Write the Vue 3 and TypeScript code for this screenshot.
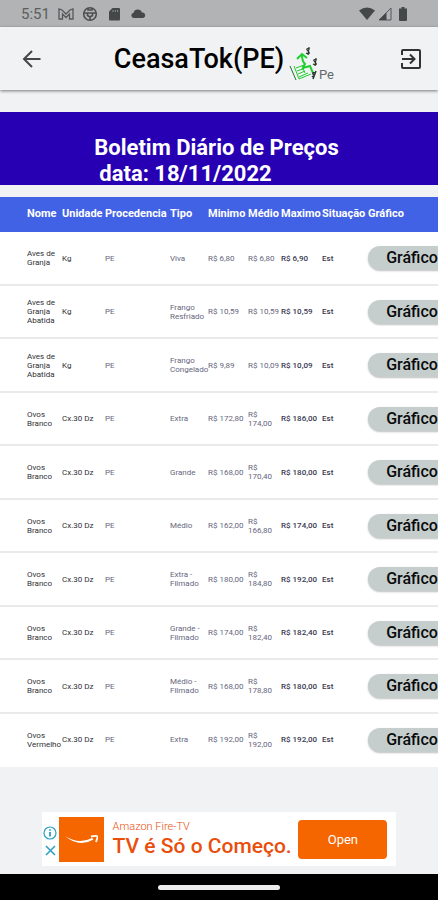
<script setup lang="ts">
interface Quote {
  name: string
  unit: string
  origin: string
  kind: string
  min: string
  avg: string
  max: string
  status: string
}

const columns: string[] = ['Nome', 'Unidade', 'Procedencia', 'Tipo', 'Minimo', 'Médio', 'Maximo', 'Situação', 'Gráfico']

const quote = (name: string, unit: string, kind: string, min: string, avg: string, max: string): Quote => ({
  name, unit, origin: 'PE', kind, min: `R$ ${min}`, avg: `R$ ${avg}`, max: `R$ ${max}`, status: 'Est',
})

const quotes: Quote[] = [
  quote('Aves de Granja', 'Kg', 'Viva', '6,80', '6,80', '6,90'),
  quote('Aves de Granja Abatida', 'Kg', 'Frango Resfriado', '10,59', '10,59', '10,59'),
  quote('Aves de Granja Abatida', 'Kg', 'Frango Congelado', '9,89', '10,09', '10,09'),
  quote('Ovos Branco', 'Cx.30 Dz', 'Extra', '172,80', '174,00', '186,00'),
  quote('Ovos Branco', 'Cx.30 Dz', 'Grande', '168,00', '170,40', '180,00'),
  quote('Ovos Branco', 'Cx.30 Dz', 'Médio', '162,00', '166,80', '174,00'),
  quote('Ovos Branco', 'Cx.30 Dz', 'Extra - Filmado', '180,00', '184,80', '192,00'),
  quote('Ovos Branco', 'Cx.30 Dz', 'Grande - Filmado', '174,00', '182,40', '182,40'),
  quote('Ovos Branco', 'Cx.30 Dz', 'Médio - Filmado', '168,00', '178,80', '180,00'),
  quote('Ovos Vermelho', 'Cx.30 Dz', 'Extra', '192,00', '192,00', '192,00'),
]
</script>

<template>
  <div class="screen">
    <div class="status">
      <span class="clock">5:51</span>
      <svg class="s-icon" viewBox="0 0 16 16" fill="none" stroke="#55585a" stroke-width="1.3"><path d="M1 13V3l3 1 4 4 4-4 3-1v10h-3.500V8L8 11.500 4.500 8v5z" /></svg>
      <svg class="s-icon" viewBox="0 0 16 16" fill="none" stroke="#4c4f50" stroke-width="1.6"><circle cx="8" cy="8" r="6.300" /><path d="M2 7h12M5.500 7v2.500l1.500 1h2l1.500-1V7M8 10v4M6 2v2h4V2" /></svg>
      <svg class="s-icon" viewBox="0 0 16 16"><path d="M6.500 2H13q1 0 1 1v10.500q0 1-1 1H4q-1 0-1-1V5.500z" fill="#454849" /><path d="M7 4v2M9.300 4v2M11.600 4v2" stroke="#8b8d8e" /></svg>
      <svg class="s-icon" viewBox="0 0 16 16"><path d="M3.500 12a2.700 2.700 0 0 1 0-5.300 4.500 4.500 0 0 1 8.500-.2A2.800 2.800 0 0 1 13 12z" fill="#454849" /></svg>
      <span class="grow"></span>
      <svg class="s-icon" viewBox="0 0 16 16"><path d="M0 4.500q8-6 16 0L8 14z" fill="#454849" /></svg>
      <svg class="s-icon" viewBox="0 0 16 16"><path d="M14 2v12H2z" fill="none" stroke="#55585a" /><path d="M9.500 6.500V14H2z" fill="#454849" /></svg>
      <svg class="s-icon" viewBox="0 0 16 16"><path d="M6.500 1h3v1.500H12V14q0 1-1 1H5q-1 0-1-1V2.500h2.500z" fill="#454849" /></svg>
    </div>

    <header class="bar">
      <button class="icon-btn" type="button" aria-label="Voltar">
        <svg viewBox="0 0 24 24" fill="none" stroke="#444647" stroke-width="2"><path d="M20.500 12H4.500M12 4l-8 8 8 8" /></svg>
      </button>
      <div class="brand">
        <h1>CeasaTok(PE)</h1>
        <svg class="logo" viewBox="0 0 46 38">
          <g fill="none" stroke="#20cf2e">
            <path d="M5 19l5 13 12-5M7 21l8-3M8 24l6-2M9 27l7-3M10 30l9-4M13 19l3 7" />
            <path d="M8 12l5-5 5 4M13 8q0 6 3 9l-2 4 7-2 3 7" stroke-width="2" />
          </g>
          <path d="M1 19l6 14" stroke="#286b32" fill="none" />
          <g fill="none" stroke="#303430" stroke-width="1.2">
            <path d="M21 2q-4-1-3 1l2 2q1 3-3 1M20 0l-1 8" />
            <path d="M28 13q-4-1-3 1l2 2q1 3-3 1M27 11l-1 8" />
            <path d="M27 26q-4-1-3 1l1 1q0 3-2 1M27 24l-3 8" stroke-width="1.5" />
          </g>
          <text x="30" y="32" class="logo-text">Pe</text>
        </svg>
      </div>
      <button class="icon-btn" type="button" aria-label="Sair">
        <svg viewBox="0 0 24 24" fill="none" stroke="#303233" stroke-width="2"><path d="M3 8V4q0-1 1-1h16q1 0 1 1v16q0 1-1 1H4q-1 0-1-1v-4M3 12h12M11 7.500l4.500 4.500-4.500 4.500" /></svg>
      </button>
    </header>

    <main>
      <h2 class="banner"><span>Boletim Diário de Preços</span><span class="date">data: 18/11/2022</span></h2>
      <div class="table-wrap">
        <table>
          <colgroup>
            <col class="c-name" /><col class="c-unit" /><col class="c-origin" /><col class="c-kind" /><col class="c-min" /><col class="c-avg" /><col class="c-max" /><col class="c-status" /><col class="c-chart" />
          </colgroup>
          <thead>
            <tr><th v-for="c in columns" :key="c" scope="col">{{ c }}</th></tr>
          </thead>
          <tbody>
            <tr v-for="(q, i) in quotes" :key="i">
              <td class="dark">{{ q.name }}</td>
              <td class="dark">{{ q.unit }}</td>
              <td>{{ q.origin }}</td>
              <td>{{ q.kind }}</td>
              <td class="line">{{ q.min }}</td>
              <td>{{ q.avg }}</td>
              <td class="line strong">{{ q.max }}</td>
              <td class="strong">{{ q.status }}</td>
              <td><button class="chart" type="button">Gráfico</button></td>
            </tr>
          </tbody>
        </table>
      </div>
    </main>

    <aside class="ad">
      <div class="ad-marks">
        <svg viewBox="0 0 14 14" fill="none" stroke="#2a9fc4" stroke-width="1.2"><circle cx="7" cy="7" r="6" /><path d="M7 6v4.500M7 3.300v1.500" stroke-width="1.8" /></svg>
        <svg viewBox="0 0 14 14" fill="none" stroke="#2a9fc4" stroke-width="1.5"><path d="M3 3l9 9M12 3l-9 9" /></svg>
      </div>
      <svg class="ad-logo" viewBox="0 0 45 45"><path d="M0 0h45v45H0z" fill="#f56600" /><path d="M6 19q14 9 27 2l1.500 1.500Q20 31 6 19z" fill="#fff" /><path d="M32 19.500q5-1 6-.500t-1 6" fill="none" stroke="#fff" stroke-width="1.8" /></svg>
      <div class="ad-copy"><span class="ad-brand">Amazon Fire-TV</span><strong>TV é Só o Começo.</strong></div>
      <button class="open" type="button">Open</button>
    </aside>
    <div class="nav"><span class="pill"></span></div>
  </div>
</template>

<style>
body { margin: 0; background: #f0f2f4; }
</style>

<style scoped>
* { box-sizing: border-box; }
.screen { min-height: 100vh; display: flex; flex-direction: column; overflow: hidden; background: #f0f2f4; font-family: Roboto, "Liberation Sans", sans-serif; color: #000; }
button { font-family: inherit; border: 0; padding: 0; }
h1, h2 { margin: 0; }
.status { height: 27px; background: #b1b3b4; display: flex; align-items: center; gap: 8px; padding: 1px 27px 0 21px; }
.clock { font-size: 15px; line-height: 16px; color: #5b5d5f; }
.s-icon { width: 16px; height: 16px; flex: none; }
.s-icon:nth-last-child(-n+2) { margin-left: -6px; }
.grow { flex: 1; }
.bar { height: 63px; display: flex; align-items: center; justify-content: space-between; padding: 0 15px 0 20px; background: #f1f2f4; box-shadow: 0 1px 3px rgba(0, 0, 0, 0.5); }
.icon-btn { width: 24px; height: 24px; background: none; }
.icon-btn svg { display: block; width: 24px; height: 24px; }
.brand { display: flex; align-items: center; gap: 5px; padding-left: 6px; }
h1 { font-size: 27px; line-height: 32px; font-weight: 500; }
.logo { width: 46px; height: 38px; margin-top: 14px; }
.logo-text { font-size: 13px; fill: #63686a; }
.banner { margin-top: 22px; height: 73px; padding-top: 23px; background: #2700b4; color: #fff; font-size: 22px; line-height: 26px; font-weight: 700; display: flex; flex-direction: column; align-items: center; }
.banner span { padding-right: 5px; }
.banner .date { padding-right: 67px; }
.table-wrap { margin-top: 12px; overflow: hidden; background: #fff; }
table { width: 468px; table-layout: fixed; border-collapse: separate; border-spacing: 0; }
.c-name { width: 62px; }
.c-unit { width: 43px; }
.c-origin { width: 65px; }
.c-kind { width: 38px; }
.c-min { width: 40px; }
.c-avg { width: 33px; }
.c-max { width: 41px; }
.c-status { width: 46px; }
.c-chart { width: 100px; }
th { height: 35px; padding: 0 0 2px; background: #4262e6; color: #fff; font-size: 11px; line-height: 12px; font-weight: 700; text-align: left; white-space: nowrap; }
td { height: 54px; padding: 0; border-bottom: 2px solid #e9eaec; color: #66667e; font-size: 8px; line-height: 9px; vertical-align: middle; }
tr:nth-child(even) td { height: 53px; }
tr:last-child td { border-bottom-color: #fff; }
th:first-child, td:first-child { padding-left: 27px; }
.dark { color: #303034; }
.strong { color: #383850; font-weight: 500; }
.line { white-space: nowrap; }
.chart { display: block; width: 88px; height: 24px; border-radius: 12px; background: #c5cdcd; color: #080a0a; font-size: 16px; line-height: 24px; font-weight: 500; box-shadow: 0 1px 2px rgba(0, 0, 0, 0.25); }
.ad { width: 81%; height: 54px; margin: auto auto 8px; display: flex; align-items: center; background: #fff; }
.ad-marks { width: 17px; display: flex; flex-direction: column; align-items: center; gap: 3px; padding-top: 4px; }
.ad-marks svg { width: 14px; height: 14px; }
.ad-logo { width: 45px; height: 45px; flex: none; }
.ad-copy { flex: 1; min-width: 0; padding-left: 9px; display: flex; flex-direction: column; white-space: nowrap; color: #e94e0c; }
.ad-brand { font-size: 11px; line-height: 14px; font-weight: 300; }
.ad-copy strong { font-size: 21px; line-height: 24px; font-weight: 500; }
.open { width: 89px; height: 39px; margin-right: 9px; flex: none; border-radius: 4px; background: #f56600; color: #fff; font-size: 13px; }
.nav { height: 26px; background: #000; display: flex; align-items: center; justify-content: center; }
.pill { width: 122px; height: 5px; border-radius: 3px; background: #ececec; }
</style>
